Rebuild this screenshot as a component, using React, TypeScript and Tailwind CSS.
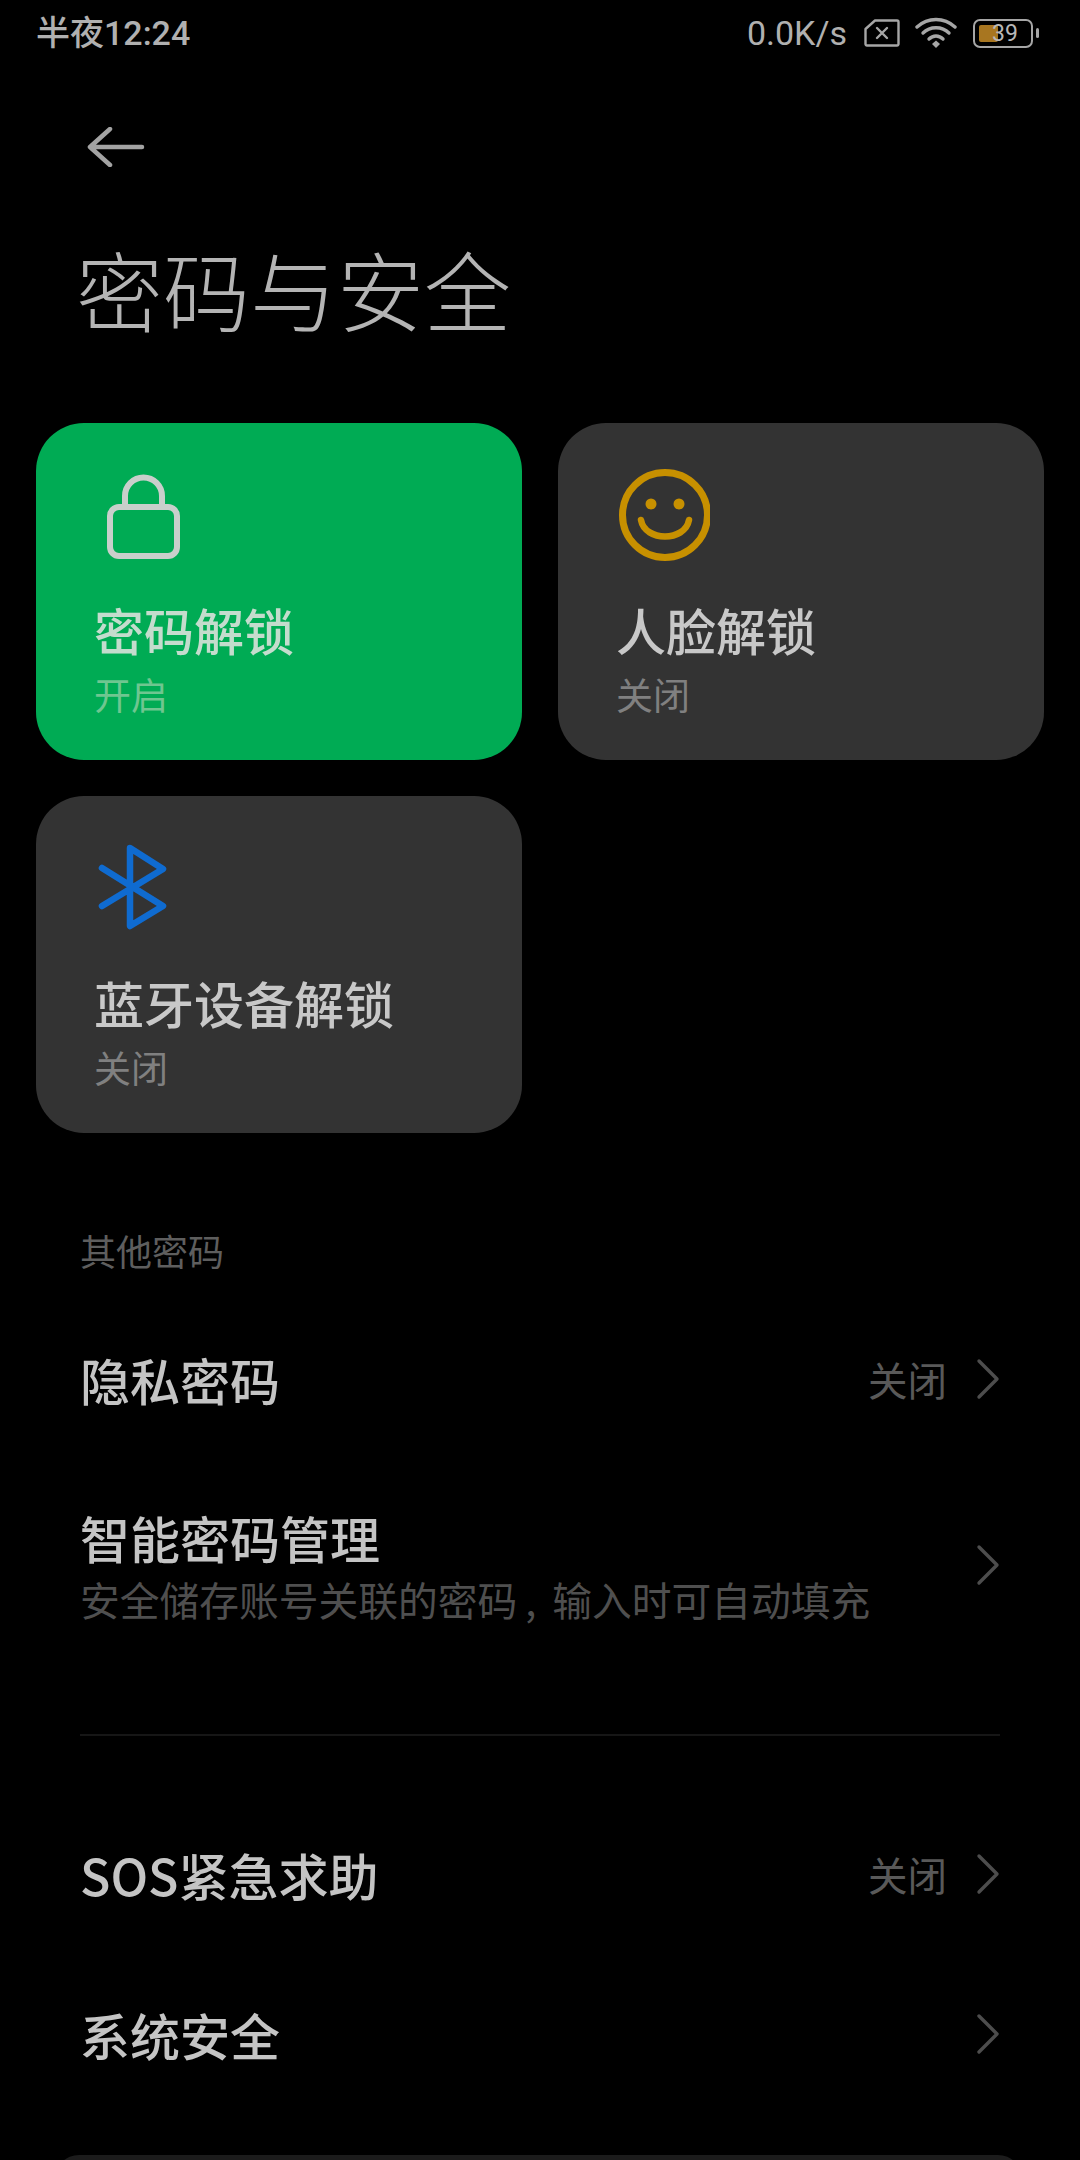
import React from "react";

const CJK = "font-['Noto_Sans_CJK_SC',sans-serif]";

function Chevron() {
  return (
    <svg width="24" height="42" viewBox="0 0 24 42" fill="none" className="shrink-0">
      <path d="M3 3 L21 21 L3 39" stroke="#4d4d4d" strokeWidth="3.4" strokeLinecap="round" strokeLinejoin="round" />
    </svg>
  );
}

function LockIcon() {
  return (
    <svg width="96" height="96" viewBox="0 0 96 96" fill="none">
      <rect x="18" y="40" width="67" height="49" rx="9" stroke="#c9cfcb" strokeWidth="6" />
      <path d="M33 40 V29 A18.5 18.5 0 0 1 70 29 V40" stroke="#c9cfcb" strokeWidth="6" />
    </svg>
  );
}

function SmileIcon() {
  return (
    <svg width="96" height="96" viewBox="0 0 96 96" fill="none">
      <circle cx="51" cy="48" r="42.5" stroke="#c79000" strokeWidth="7" />
      <circle cx="37" cy="37" r="5.5" fill="#c79000" />
      <circle cx="65" cy="37" r="5.5" fill="#c79000" />
      <path d="M27 53 C31 75 71 75 75 53" stroke="#c79000" strokeWidth="6.5" strokeLinecap="round" />
    </svg>
  );
}

function BluetoothIcon() {
  return (
    <svg width="96" height="96" viewBox="0 0 96 96" fill="none">
      <path
        d="M10 28 L71 66 L38 86 V8 L71 29 L10 66"
        stroke="#0f6bd0"
        strokeWidth="6.5"
        strokeLinecap="round"
        strokeLinejoin="round"
      />
    </svg>
  );
}

function SimIcon() {
  return (
    <svg width="36" height="28" viewBox="0 0 36 28" fill="none">
      <path d="M11 1.5 H33 A1.5 1.5 0 0 1 34.5 3 V25 A1.5 1.5 0 0 1 33 26.5 H3 A1.5 1.5 0 0 1 1.5 25 V10 Z" stroke="#a6a6a6" strokeWidth="2.4" strokeLinejoin="round" />
      <path d="M13 9 L23 19 M23 9 L13 19" stroke="#a6a6a6" strokeWidth="2.4" strokeLinecap="round" />
    </svg>
  );
}

function WifiIcon() {
  return (
    <svg width="42" height="32" viewBox="0 0 42 32" fill="none">
      <path d="M2 10 C13 0 29 0 40 10" stroke="#a6a6a6" strokeWidth="3.4" strokeLinecap="round" />
      <path d="M8 16 C15 9 27 9 34 16" stroke="#a6a6a6" strokeWidth="3.4" strokeLinecap="round" />
      <path d="M14 22 C18 18 24 18 28 22" stroke="#a6a6a6" strokeWidth="3.4" strokeLinecap="round" />
      <path d="M17 27 L21 23.5 L25 27 L21 31 Z" fill="#a6a6a6" />
    </svg>
  );
}

function Battery() {
  return (
    <div className="flex items-center gap-[3px]">
      <div className="relative flex h-[29px] w-[60px] items-center rounded-[7px] border-[2.5px] border-[#a6a6a6] px-[4px]">
        <div className="h-[17px] w-[19px] rounded-[2px] bg-[#a87620]" />
        <span className="absolute inset-0 flex items-center justify-center pl-[4px] font-['Roboto',sans-serif] text-[23px] font-normal leading-none text-[#b8b8b8]">
          39
        </span>
      </div>
      <div className="h-[10px] w-[3px] rounded-full bg-[#a6a6a6]" />
    </div>
  );
}

function StatusBar() {
  return (
    <div className="flex h-[66px] items-center justify-between pl-[36px] pr-[41px] text-[32px] font-medium leading-none text-[#b0b0b0]">
      <span className="font-['Roboto','Noto_Sans_CJK_SC',sans-serif] text-[34px]">半夜12:24</span>
      <div className="flex items-center">
        <span className="mr-[17px] font-['Roboto',sans-serif] text-[34px] font-normal">0.0K/s</span>
        <div className="mr-[15px]">
          <SimIcon />
        </div>
        <div className="mr-[16px]">
          <WifiIcon />
        </div>
        <Battery />
      </div>
    </div>
  );
}

interface CardProps {
  icon: React.ReactNode;
  title: string;
  status: string;
  active?: boolean;
}

function UnlockCard({ icon, title, status, active }: CardProps) {
  return (
    <div className={`h-[337px] rounded-[48px] pt-[44px] ${active ? "bg-[#00ab54]" : "bg-[#333333]"}`}>
      <div className="pl-[56px]">{icon}</div>
      <div className={`mt-[36px] pl-[58px] text-[50px] font-medium leading-[60px] ${active ? "text-[#c4dccd]" : "text-[#c8c8c8]"}`}>
        {title}
      </div>
      <div className={`mt-[12px] pl-[58px] text-[37px] leading-[46px] ${active ? "text-[#6fc690]" : "text-[#808080]"}`}>
        {status}
      </div>
    </div>
  );
}

function Row({ title, value }: { title: string; value?: string }) {
  return (
    <div className="flex h-[160px] items-center justify-between">
      <span className="text-[50px] font-medium leading-[60px] text-[#c4c4c4]">{title}</span>
      <div className="flex items-center gap-[29px]">
        {value && <span className="text-[39.5px] leading-[46px] text-[#595959]">{value}</span>}
        <Chevron />
      </div>
    </div>
  );
}

export default function App() {
  return (
    <div className={`relative h-[2160px] w-[1080px] overflow-hidden bg-black ${CJK}`}>
      <StatusBar />

      <div className="pl-[87px] pt-[61px]">
        <svg width="58" height="40" viewBox="0 0 58 40" fill="none">
          <path d="M23 2 L3 20 L23 38 M3 20 H55" stroke="#a3a3a3" strokeWidth="4.5" strokeLinecap="round" strokeLinejoin="round" />
        </svg>
      </div>

      <h1 className="mt-[66px] pl-[76px] text-[87px] font-extralight leading-[110px] text-[#b4b4b4]">密码与安全</h1>

      <div className="mt-[80px] grid grid-cols-2 gap-x-[36px] gap-y-[36px] px-[36px]">
        <UnlockCard icon={<LockIcon />} title="密码解锁" status="开启" active />
        <UnlockCard icon={<SmileIcon />} title="人脸解锁" status="关闭" />
        <UnlockCard icon={<BluetoothIcon />} title="蓝牙设备解锁" status="关闭" />
      </div>

      <div className="mt-[94px] pl-[80px] text-[36px] leading-[46px] text-[#5e5e5e]">其他密码</div>

      <div className="mt-[26px] pl-[80px] pr-[80px]">
        <Row title="隐私密码" value="关闭" />
        <div className="flex h-[212px] items-center justify-between">
          <div>
            <div className="text-[50px] font-medium leading-[60px] text-[#c4c4c4]">智能密码管理</div>
            <div className="mt-[7px] text-[39.75px] leading-[50px] text-[#4f4f4f]">
              安全储存账号关联的密码<span className="inline-block w-[35px] pl-[8px]">,</span>输入时可自动填充
            </div>
          </div>
          <Chevron />
        </div>
        <div className="mt-[63px] h-[2px] bg-[#161616]" />
        <div className="mt-[58px]">
          <Row title="SOS紧急求助" value="关闭" />
          <Row title="系统安全" />
        </div>
      </div>

      {/* next card just peeking in at the bottom edge */}
      <div className="absolute left-[55px] right-[58px] top-[2155px] h-[60px] rounded-t-[24px] bg-[#1c1c1c]" />
    </div>
  );
}
